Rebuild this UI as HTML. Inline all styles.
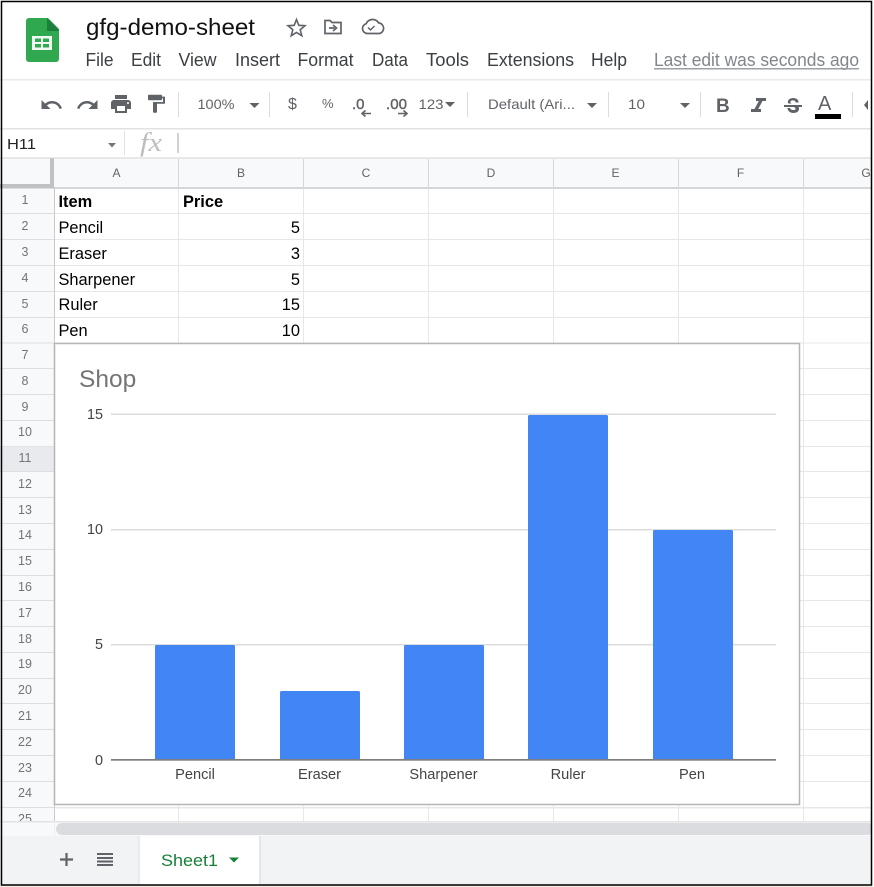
<!DOCTYPE html>
<html><head><meta charset="utf-8"><style>
html,body{margin:0;padding:0;background:#fff;width:874px;height:887px;overflow:hidden}
svg{display:block;position:absolute;left:0;top:0}
text{font-family:"Liberation Sans",sans-serif}
.m{font-size:18px;fill:#3c4043}
.t{font-size:14px;fill:#5f6368}
.c{font-size:16.4px;fill:#000}
.r{font-size:12.5px;fill:#70757a;text-anchor:middle}
.h{font-size:12px;fill:#5f6368;text-anchor:middle}
.a{font-size:14.6px;fill:#444;text-anchor:middle}
.y{font-size:14.4px;fill:#444;text-anchor:end}
</style></head><body>
<svg width="874" height="887" viewBox="0 0 874 887" xmlns="http://www.w3.org/2000/svg">
<rect width="874" height="887" fill="#fff"/>
<!-- logo -->
<path d="M30 18h18l11 11v30a3 3 0 0 1-3 3H29a3 3 0 0 1-3-3V21a3 3 0 0 1 3-3z" fill="#2fa84f"/>
<path d="M47 18l12 12v1H47z" fill="#1c7f3b"/>
<rect x="32" y="36" width="20" height="14" fill="#f1f8f3"/>
<rect x="35" y="38.500" width="6" height="3.500" fill="#2fa84f"/><rect x="43" y="38.500" width="6" height="3.500" fill="#2fa84f"/>
<rect x="35" y="44" width="6" height="3.500" fill="#2fa84f"/><rect x="43" y="44" width="6" height="3.500" fill="#2fa84f"/>
<!-- title -->
<text x="86" y="35" font-size="23" fill="#111" textLength="169" lengthAdjust="spacingAndGlyphs">gfg-demo-sheet</text>
<path d="M296.500 19.500l2.300 5.800 6.200.4-4.800 4 1.600 6-5.300-3.300-5.300 3.300 1.600-6-4.800-4 6.200-.4z" fill="none" stroke="#5f6368" stroke-width="1.600"/>
<path d="M325 20.500h5l2 2h9v11h-16z" fill="none" stroke="#5f6368" stroke-width="1.700"/>
<path d="M329 28h5.500M333 25l3.500 3-3.500 3" fill="none" stroke="#5f6368" stroke-width="1.700"/>
<path d="M367 33.500a5 5 0 0 1-.8-9.800 7 7 0 0 1 12.400-.8 5.400 5.400 0 0 1 1 10.600z" fill="none" stroke="#5f6368" stroke-width="1.700"/>
<path d="M368 27.500l2.500 2.500 4-4" fill="none" stroke="#5f6368" stroke-width="1.500"/>
<!-- menu -->
<text class="m" x="85.500" y="66" textLength="28" lengthAdjust="spacingAndGlyphs">File</text>
<text class="m" x="131" y="66" textLength="30" lengthAdjust="spacingAndGlyphs">Edit</text>
<text class="m" x="178.500" y="66" textLength="38" lengthAdjust="spacingAndGlyphs">View</text>
<text class="m" x="235" y="66" textLength="45" lengthAdjust="spacingAndGlyphs">Insert</text>
<text class="m" x="297.500" y="66" textLength="56" lengthAdjust="spacingAndGlyphs">Format</text>
<text class="m" x="372" y="66" textLength="36" lengthAdjust="spacingAndGlyphs">Data</text>
<text class="m" x="426" y="66" textLength="43" lengthAdjust="spacingAndGlyphs">Tools</text>
<text class="m" x="487" y="66" textLength="87" lengthAdjust="spacingAndGlyphs">Extensions</text>
<text class="m" x="591" y="66" textLength="36" lengthAdjust="spacingAndGlyphs">Help</text>
<text x="654" y="66" font-size="18" fill="#80868b" textLength="205" lengthAdjust="spacingAndGlyphs">Last edit was seconds ago</text>
<rect x="654" y="68" width="205" height="1.500" fill="#9aa0a6"/>
<rect x="0" y="79" width="874" height="1.500" fill="#e8eaed"/>
<!-- toolbar icons -->
<path transform="translate(39.500,93)" d="M12.500 8c-2.650 0-5.050.99-6.900 2.600L2 7v9h9l-3.620-3.620c1.390-1.160 3.160-1.880 5.120-1.880 3.540 0 6.550 2.310 7.600 5.500l2.370-.78C21.080 11.030 17.150 8 12.500 8z" fill="#5f6368"/>
<path transform="translate(75.500,93)" d="M18.400 10.600C16.550 8.990 14.150 8 11.500 8c-4.650 0-8.580 3.030-9.960 7.220L3.900 16c1.050-3.190 4.050-5.500 7.600-5.500 1.950 0 3.730.72 5.120 1.880L13 16h9V7l-3.600 3.600z" fill="#5f6368"/>
<path transform="translate(109,92)" d="M19 8H5c-1.660 0-3 1.340-3 3v6h4v4h12v-4h4v-6c0-1.660-1.340-3-3-3zm-3 11H8v-5h8v5zm3-7c-.55 0-1-.45-1-1s.45-1 1-1 1 .45 1 1-.45 1-1 1zm-1-9H6v4h12V3z" fill="#5f6368"/>
<path transform="translate(144,93) scale(1,.9)" d="M18 4V3c0-.55-.45-1-1-1H5c-.55 0-1 .45-1 1v4c0 .55.45 1 1 1h12c.55 0 1-.45 1-1V6h1v4H9v11c0 .55.45 1 1 1h2c.55 0 1-.45 1-1v-9h8V4h-3z" fill="#5f6368"/>
<rect x="178" y="92" width="1" height="25" fill="#dadce0"/>
<text class="t" x="197.500" y="109" textLength="37" lengthAdjust="spacingAndGlyphs">100%</text>
<path d="M249.500 103h10l-5 5z" fill="#5f6368"/>
<rect x="269" y="92" width="1" height="25" fill="#dadce0"/>
<text class="t" x="288" y="109" style="font-size:16px">$</text>
<text class="t" x="322" y="108" style="font-size:13px">%</text>
<text x="352" y="109" font-size="15" fill="#5f6368" stroke="#5f6368" stroke-width=".4">.0</text>
<path d="M362 113.500h9M365.500 110.500l-3.500 3 3.500 3" fill="none" stroke="#5f6368" stroke-width="1.600"/>
<text x="386" y="109" font-size="15" fill="#5f6368" stroke="#5f6368" stroke-width=".4" textLength="21" lengthAdjust="spacingAndGlyphs">.00</text>
<path d="M398 113.500h9M403.500 110.500l3.500 3-3.500 3" fill="none" stroke="#5f6368" stroke-width="1.600"/>
<text class="t" x="418.500" y="109" textLength="25" lengthAdjust="spacingAndGlyphs">123</text>
<path d="M445 102h10l-5 5z" fill="#5f6368"/>
<rect x="467" y="92" width="1" height="25" fill="#dadce0"/>
<text class="t" x="488" y="109" textLength="87" lengthAdjust="spacingAndGlyphs">Default (Ari...</text>
<path d="M587 103h10l-5 5z" fill="#5f6368"/>
<rect x="608" y="92" width="1" height="25" fill="#dadce0"/>
<text class="t" x="628" y="109" textLength="17" lengthAdjust="spacingAndGlyphs">10</text>
<path d="M680 103h10l-5 5z" fill="#5f6368"/>
<rect x="700" y="92" width="1" height="25" fill="#dadce0"/>
<text x="716" y="112" font-size="19" font-weight="bold" fill="#5f6368">B</text>
<path transform="translate(743.500,94) scale(1.250,1)" d="M10 4v3h2.210l-3.420 8H6v3h8v-3h-2.210l3.420-8H18V4z" fill="#5f6368"/>
<path transform="translate(781,95)" d="M6.850 7.080C6.850 4.370 9.450 3 12.240 3c1.640 0 3 .49 3.900 1.280.77.65 1.460 1.730 1.460 3.240h-3.010c0-.31-.05-.59-.15-.85-.29-.86-1.200-1.280-2.350-1.280-2.040 0-2.620.87-2.620 1.700 0 .67.75 1.120 1.130 1.370H7.340c-.3-.45-.49-1.010-.49-1.380zM21 12v-2H3v2h9.620c1.150.45 1.960.75 1.960 1.690 0 .77-.62 1.300-2.140 1.300-1.600 0-2.910-.42-3.300-2.010H6.500c.1 2.990 2.670 5.020 5.900 5.020 3.400 0 5.600-1.670 5.600-4.100 0-.73-.12-1.340-.36-1.900z" fill="#5f6368"/>
<text x="818" y="110" font-size="20" fill="#5f6368">A</text>
<rect x="815" y="114" width="26" height="5" fill="#000"/>
<rect x="852" y="92" width="1" height="25" fill="#dadce0"/>
<path d="M868 100l-4 5 4 5z" fill="#5f6368"/>
<rect x="0" y="128" width="874" height="1.500" fill="#e0e2e5"/>
<!-- formula bar -->
<text x="7" y="149" font-size="15" fill="#222" textLength="29" lengthAdjust="spacingAndGlyphs">H11</text>
<path d="M108 143h8l-4 4.500z" fill="#757575"/>
<rect x="124" y="131" width="1" height="24" fill="#e0e2e5"/>
<text x="140" y="151" fill="#bdbdbd" textLength="22" lengthAdjust="spacingAndGlyphs" style="font-family:'Liberation Serif',serif;font-style:italic;font-size:26px">fx</text>
<rect x="177" y="133" width="2" height="20" fill="#d0d3d6"/>
<rect x="0" y="157.500" width="874" height="1.200" fill="#d0d3d6"/>
<!-- headers -->
<rect x="0" y="158.500" width="874" height="30" fill="#f8f9fa"/>
<rect x="0" y="188" width="55" height="636" fill="#f8f9fa"/>
<rect x="0" y="184" width="54" height="4.500" fill="#c0c1c3"/>
<rect x="50" y="158.500" width="4" height="30" fill="#c0c1c3"/>
<rect x="54" y="187" width="820" height="2" fill="#d5d6d8"/>
<g fill="#d5d7da">
<rect x="178" y="159" width="1" height="29"/><rect x="303" y="159" width="1" height="29"/><rect x="428" y="159" width="1" height="29"/><rect x="553" y="159" width="1" height="29"/><rect x="678" y="159" width="1" height="29"/><rect x="803" y="159" width="1" height="29"/>
</g>
<text class="h" x="116.500" y="177">A</text><text class="h" x="241" y="177">B</text><text class="h" x="366" y="177">C</text><text class="h" x="491" y="177">D</text><text class="h" x="615.500" y="177">E</text><text class="h" x="740.500" y="177">F</text><text class="h" x="866" y="177">G</text>
<!-- grid -->
<g fill="#e6e7e9">
<rect x="178" y="189" width="1" height="632"/><rect x="303" y="189" width="1" height="632"/><rect x="428" y="189" width="1" height="632"/><rect x="553" y="189" width="1" height="632"/><rect x="678" y="189" width="1" height="632"/><rect x="803" y="189" width="1" height="632"/>
<rect x="54" y="213" width="820" height="1"/><rect x="54" y="239" width="820" height="1"/><rect x="54" y="265" width="820" height="1"/><rect x="54" y="291" width="820" height="1"/><rect x="54" y="317" width="820" height="1"/><rect x="54" y="342.500" width="820" height="1"/>
<rect x="800" y="368" width="74" height="1"/><rect x="800" y="394" width="74" height="1"/><rect x="800" y="420" width="74" height="1"/><rect x="800" y="446" width="74" height="1"/><rect x="800" y="471" width="74" height="1"/><rect x="800" y="497" width="74" height="1"/><rect x="800" y="523" width="74" height="1"/><rect x="800" y="549" width="74" height="1"/><rect x="800" y="575" width="74" height="1"/><rect x="800" y="600" width="74" height="1"/><rect x="800" y="626" width="74" height="1"/><rect x="800" y="652" width="74" height="1"/><rect x="800" y="678" width="74" height="1"/><rect x="800" y="703" width="74" height="1"/><rect x="800" y="729" width="74" height="1"/><rect x="800" y="755" width="74" height="1"/><rect x="800" y="781" width="74" height="1"/><rect x="54" y="807" width="820" height="1.500"/>
</g>
<rect x="54" y="188" width="1" height="636" fill="#c8c9cb"/>
<g fill="#dcdee0">
<rect x="0" y="213" width="54" height="1"/><rect x="0" y="239" width="54" height="1"/><rect x="0" y="265" width="54" height="1"/><rect x="0" y="291" width="54" height="1"/><rect x="0" y="317" width="54" height="1"/><rect x="0" y="342.500" width="54" height="1"/><rect x="0" y="368" width="54" height="1"/><rect x="0" y="394" width="54" height="1"/><rect x="0" y="420" width="54" height="1"/><rect x="0" y="446" width="54" height="1"/><rect x="0" y="471" width="54" height="1"/><rect x="0" y="497" width="54" height="1"/><rect x="0" y="523" width="54" height="1"/><rect x="0" y="549" width="54" height="1"/><rect x="0" y="575" width="54" height="1"/><rect x="0" y="600" width="54" height="1"/><rect x="0" y="626" width="54" height="1"/><rect x="0" y="652" width="54" height="1"/><rect x="0" y="678" width="54" height="1"/><rect x="0" y="703" width="54" height="1"/><rect x="0" y="729" width="54" height="1"/><rect x="0" y="755" width="54" height="1"/><rect x="0" y="781" width="54" height="1"/><rect x="0" y="807" width="54" height="1"/>
</g>
<rect x="0" y="446.500" width="54" height="24.500" fill="#e8eaed"/>
<text class="r" x="25" y="204">1</text><text class="r" x="25" y="230">2</text><text class="r" x="25" y="256">3</text><text class="r" x="25" y="282">4</text><text class="r" x="25" y="308">5</text><text class="r" x="25" y="333">6</text><text class="r" x="25" y="359">7</text><text class="r" x="25" y="385">8</text><text class="r" x="25" y="411">9</text><text class="r" x="25" y="436">10</text><text class="r" x="25" y="462">11</text><text class="r" x="25" y="488">12</text><text class="r" x="25" y="514">13</text><text class="r" x="25" y="539">14</text><text class="r" x="25" y="565">15</text><text class="r" x="25" y="591">16</text><text class="r" x="25" y="617">17</text><text class="r" x="25" y="643">18</text><text class="r" x="25" y="668">19</text><text class="r" x="25" y="694">20</text><text class="r" x="25" y="720">21</text><text class="r" x="25" y="746">22</text><text class="r" x="25" y="772">23</text><text class="r" x="25" y="797">24</text><text class="r" x="25" y="823">25</text>
<!-- cells -->
<text class="c" x="58.500" y="207" font-weight="bold">Item</text><text class="c" x="183" y="207" font-weight="bold">Price</text>
<text class="c" x="58.500" y="233">Pencil</text><text class="c" x="58.500" y="259">Eraser</text><text class="c" x="58.500" y="285">Sharpener</text><text class="c" x="58.500" y="310">Ruler</text><text class="c" x="58.500" y="336">Pen</text>
<g text-anchor="end"><text class="c" x="300" y="233">5</text><text class="c" x="300" y="259">3</text><text class="c" x="300" y="285">5</text><text class="c" x="300" y="310">15</text><text class="c" x="300" y="336">10</text></g>
<!-- chart -->
<rect x="54.500" y="343.500" width="745" height="461" fill="#fff" stroke="#b5b5b5" stroke-width="1.500"/>
<text x="79" y="387" font-size="24.500" fill="#757575">Shop</text>
<g fill="#dcdcdc"><rect x="111" y="413.500" width="665" height="1.500"/><rect x="111" y="529" width="665" height="1.500"/><rect x="111" y="644" width="665" height="1.500"/></g>
<g fill="#4285f4">
<rect x="155" y="645" width="80" height="115" rx="1.500"/><rect x="280" y="691" width="80" height="69" rx="1.500"/><rect x="404" y="645" width="80" height="115" rx="1.500"/><rect x="528" y="415" width="80" height="345" rx="1.500"/><rect x="653" y="530" width="80" height="230" rx="1.500"/>
</g>
<rect x="111" y="759" width="665" height="1.700" fill="#7e7e7e"/>
<text class="y" x="103" y="419">15</text><text class="y" x="103" y="534">10</text><text class="y" x="103" y="649">5</text><text class="y" x="103" y="765">0</text>
<text class="a" x="195" y="779">Pencil</text><text class="a" x="319.500" y="779">Eraser</text><text class="a" x="443.500" y="779">Sharpener</text><text class="a" x="568" y="779">Ruler</text><text class="a" x="692" y="779">Pen</text>
<!-- bottom -->
<rect x="0" y="821" width="874" height="66" fill="#f8f9fa"/>
<rect x="0" y="821" width="874" height="1.500" fill="#e3e4e6"/>
<rect x="54" y="822" width="1" height="14" fill="#eeeeee"/>
<rect x="56" y="823" width="818" height="12" rx="6" fill="#dadce0"/>
<rect x="0" y="836" width="874" height="51" fill="#f1f3f4"/>
<rect x="140" y="836" width="119" height="49" fill="#fff"/>
<rect x="259" y="836" width="2" height="49" fill="#e4e6e8"/>
<rect x="137.500" y="836" width="2.500" height="49" fill="#e9ebed"/>
<path d="M66.500 853v13M60 859.500h13" stroke="#5f6368" stroke-width="2.200"/>
<g fill="#5f6368"><rect x="97" y="853" width="16" height="2"/><rect x="97" y="857" width="16" height="2"/><rect x="97" y="860.500" width="16" height="2"/><rect x="97" y="864" width="16" height="2"/></g>
<text x="161" y="866" font-size="17" fill="#188038" textLength="57" lengthAdjust="spacingAndGlyphs">Sheet1</text>
<path d="M229 857.500h10l-5 5z" fill="#188038"/>
<!-- frame -->
<rect x="0" y="885" width="874" height="2" fill="#f3ebe1"/>
<rect x="872" y="0" width="2" height="887" fill="#fff"/>
<path d="M1.500 885V1.500H871.500V885H1.500z" fill="none" stroke="#000" stroke-width="1.500"/>
</svg>
</body></html>
